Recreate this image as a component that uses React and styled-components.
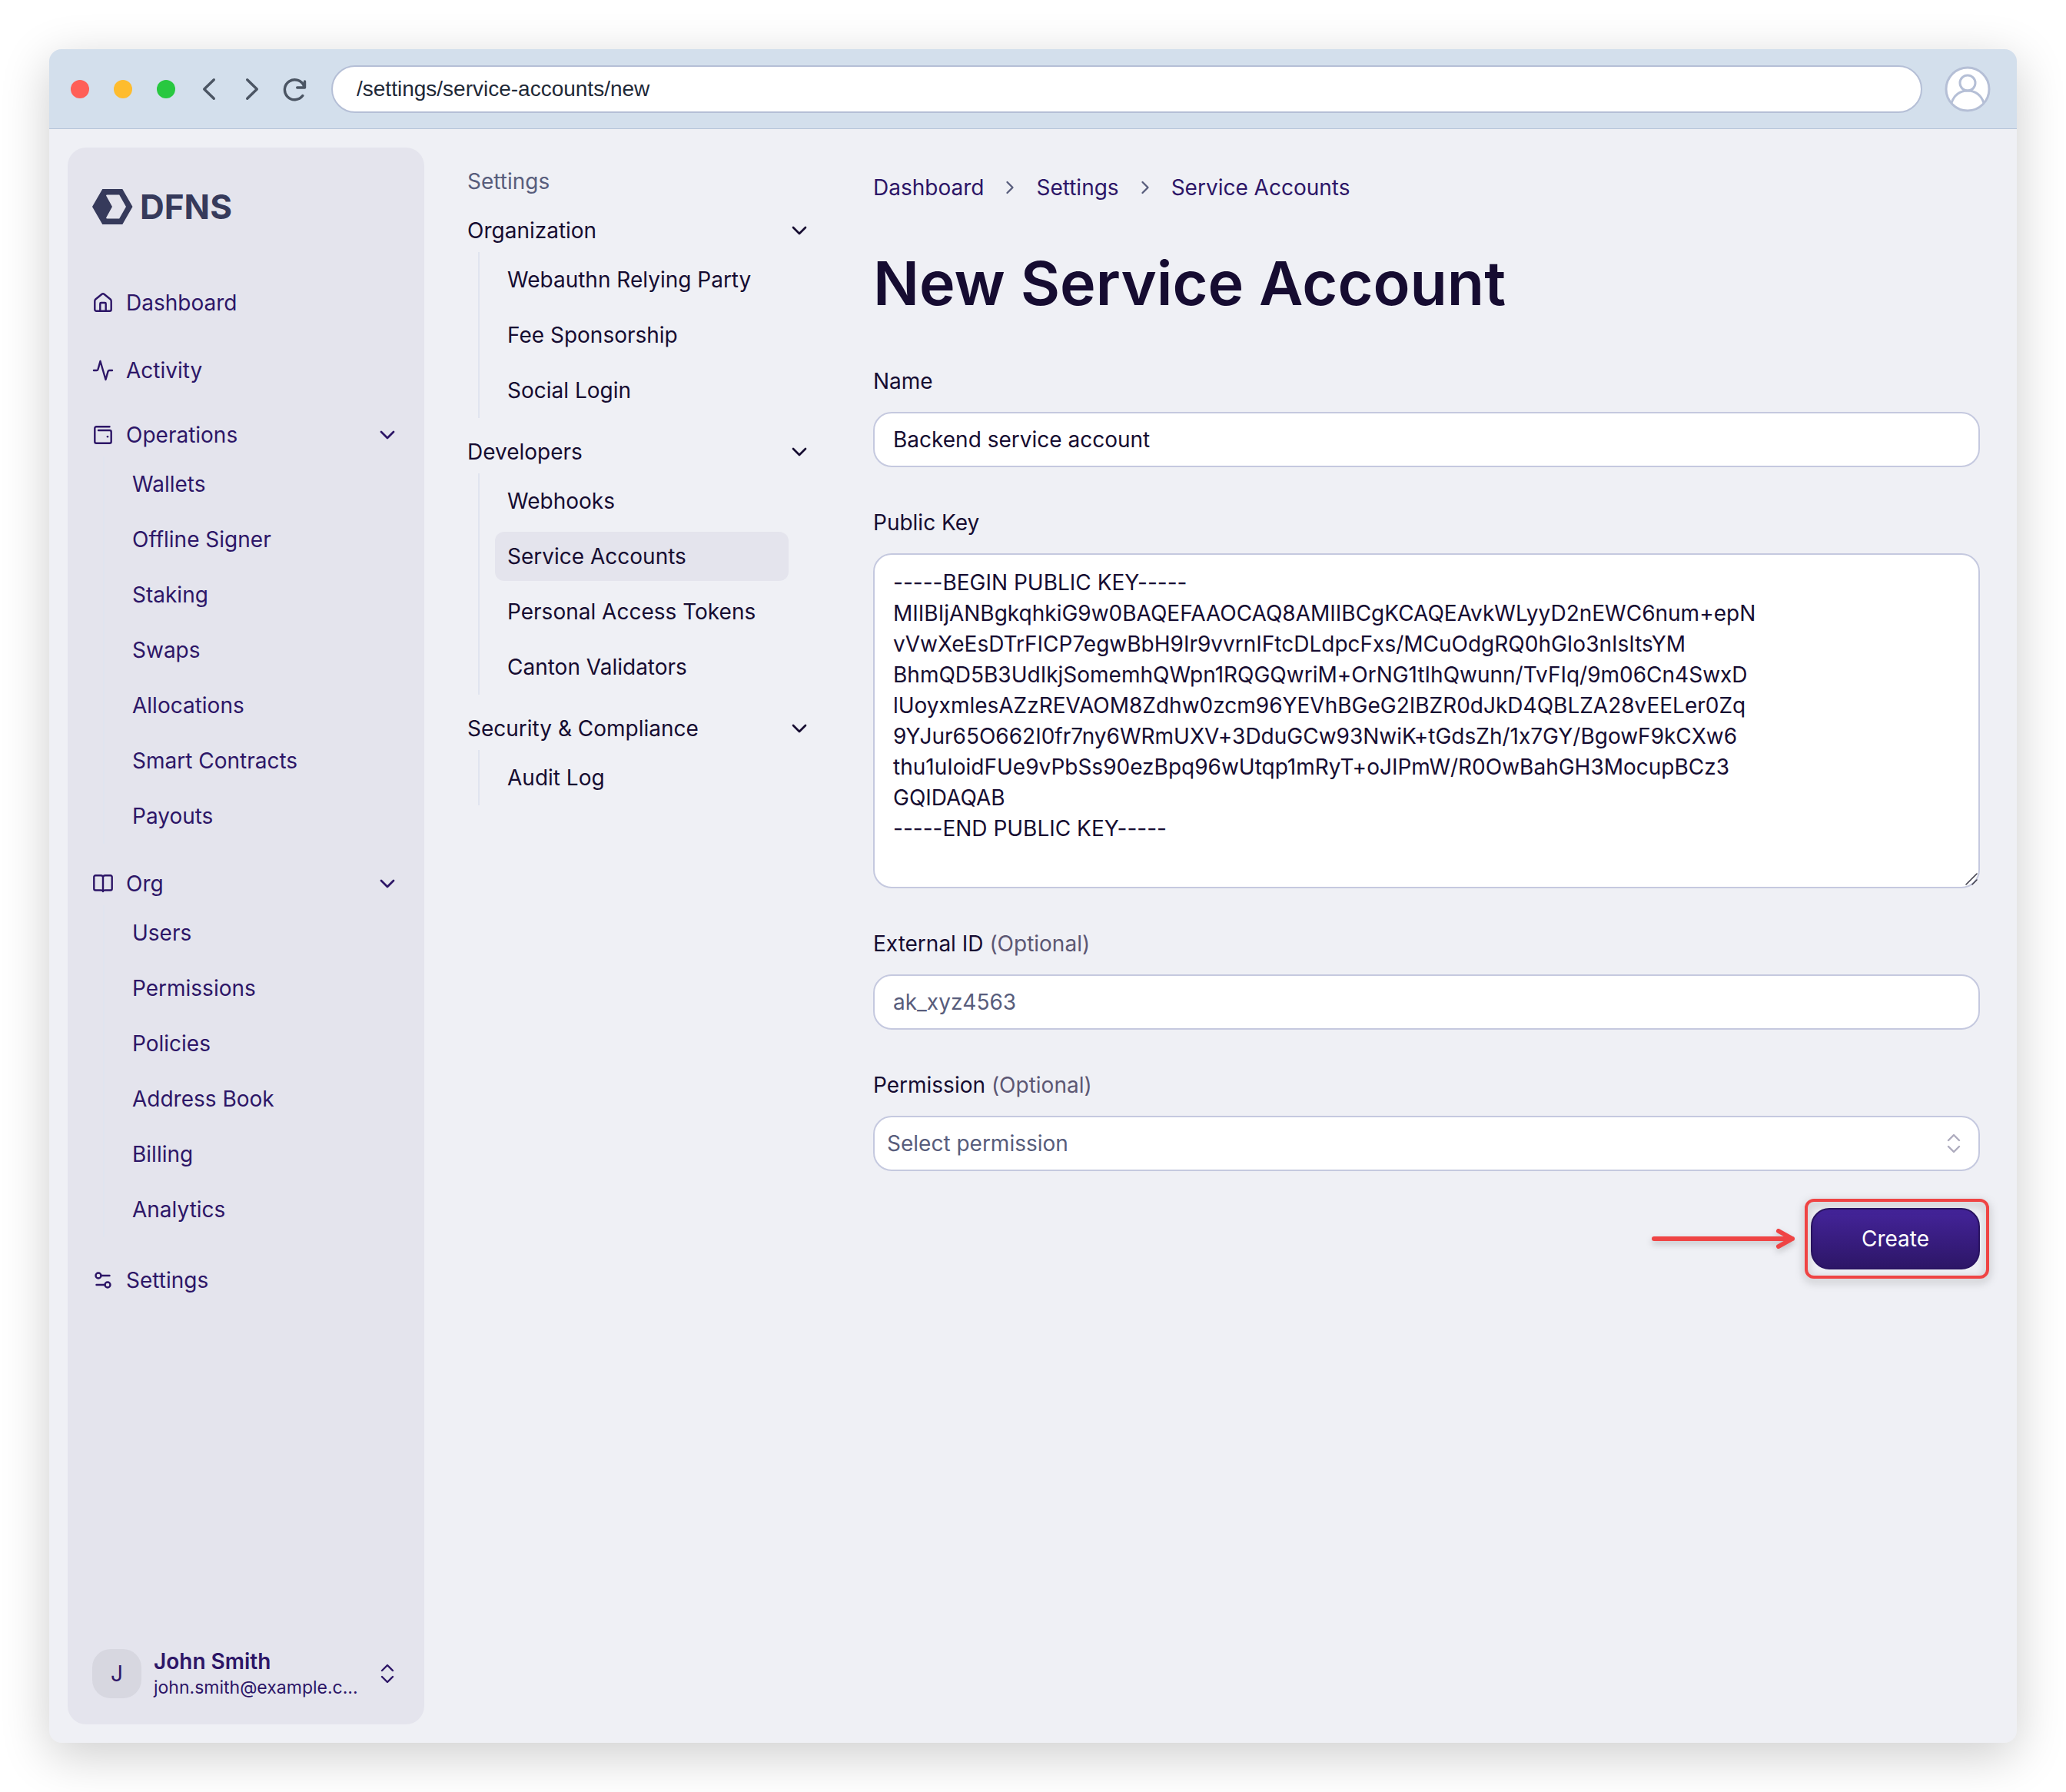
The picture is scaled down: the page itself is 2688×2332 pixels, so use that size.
import styled, { createGlobalStyle, css } from "styled-components";
import { ChevronDown, ChevronRight } from "lucide-react";

const ink = "#160c31";
const purple = "#2d1667";
const muted = "#585d7c";
const panel = "#e4e4ed";
const canvas = "#eff0f5";
const line = "#c5c9df";
const red = "#ef4444";

const GlobalStyle = createGlobalStyle`
  * {
    box-sizing: border-box;
  }
  body {
    margin: 0;
    background: #ffffff;
    color: ${ink};
    font-family: "Inter", "Liberation Sans", sans-serif;
    font-size: 28px;
    line-height: 40px;
    font-feature-settings: "calt" 0;
  }
  a {
    color: inherit;
    text-decoration: none;
  }
  button, input, select, textarea {
    font: inherit;
    font-feature-settings: inherit;
    color: inherit;
  }
  ul, ol {
    list-style: none;
    margin: 0;
    padding: 0;
  }
  svg {
    flex: none;
    display: block;
  }
`;

const Page = styled.div`
  padding: 64px;
`;

const Browser = styled.div`
  display: flex;
  flex-direction: column;
  min-height: calc(100vh - 128px);
  border-radius: 16px;
  overflow: hidden;
  background: ${canvas};
  box-shadow: 0 16px 64px rgba(0, 0, 0, 0.2);
`;

const Toolbar = styled.header`
  display: flex;
  align-items: center;
  height: 104px;
  padding: 0 34px 0 28px;
  background: #d3dfec;
  border-bottom: 1px solid #b5c4d8;
`;

const Lights = styled.div`
  display: flex;
  gap: 32px;
  margin-right: 16px;
`;

const Light = styled.span`
  width: 24px;
  height: 24px;
  border-radius: 50%;
  background: ${({ $color }) => $color};
`;

const ToolButton = styled.button`
  display: flex;
  align-items: center;
  justify-content: center;
  width: 56px;
  height: 40px;
  padding: 0;
  border: 0;
  background: none;
  color: #4b5563;
`;

const Address = styled.input`
  flex: 1;
  min-width: 0;
  height: 62px;
  margin: 0 29px 0 19px;
  padding: 0 31px;
  border: 2px solid #b5bfd6;
  border-radius: 31px;
  background: #ffffff;
  color: #1f2937;
  font-family: "Liberation Sans", Arial, sans-serif;
`;

const Body = styled.div`
  display: flex;
  flex: 1;
  padding: 24px 48px 24px 24px;
`;

const Sidebar = styled.aside`
  display: flex;
  flex-direction: column;
  flex: none;
  width: 464px;
  padding: 52px 32px 32px;
  border-radius: 24px;
  background: ${panel};
  color: ${purple};
`;

const Logo = styled.a`
  display: flex;
  align-items: center;
  gap: 8px;
  height: 50px;
  margin-bottom: 68px;
  color: #363a5b;
  font-size: 44px;
  font-weight: 700;
`;

const MainNav = styled.nav`
  display: flex;
  flex-direction: column;
  gap: 24px;
`;

const NavLink = styled.a`
  display: flex;
  align-items: center;
  gap: 16px;
  height: 64px;
`;

const GroupButton = styled.button`
  display: flex;
  align-items: center;
  gap: 16px;
  width: 100%;
  height: 56px;
  padding: 0;
  border: 0;
  background: none;
  text-align: left;

  span {
    flex: 1;
  }
`;

const SubList = styled.ul`
  margin-left: 14px;
  border-left: 2px solid #e0e4ef;

  ${({ $nested }) =>
    $nested &&
    css`
      padding: 0 30px 0 20px;
    `}
`;

const SubItem = styled.li`
  padding: 4px 0;
`;

const SubLink = styled.a`
  display: flex;
  align-items: center;
  height: 64px;
  padding: 0 ${({ $inset }) => $inset}px;
  border-radius: 12px;
  background: ${({ $active }) => ($active ? panel : "transparent")};
  white-space: nowrap;
`;

const Account = styled.button`
  display: flex;
  align-items: center;
  gap: 16px;
  width: 100%;
  height: 68px;
  margin-top: auto;
  padding: 0;
  border: 0;
  background: none;
  text-align: left;
`;

const Initial = styled.span`
  display: flex;
  flex: none;
  align-items: center;
  justify-content: center;
  width: 64px;
  height: 64px;
  border-radius: 24px;
  background: #d7d7e0;
`;

const Who = styled.span`
  display: flex;
  flex-direction: column;
  flex: 1;
  min-width: 0;
  white-space: nowrap;
`;

const FullName = styled.span`
  font-weight: 600;
  line-height: 36px;
`;

const Email = styled.span`
  font-size: 23px;
  line-height: 32px;
`;

const SettingsNav = styled.nav`
  flex: none;
  width: 448px;
  margin-left: 56px;
  padding-top: 24px;
`;

const NavTitle = styled.p`
  margin: 0 0 16px;
  color: ${muted};
`;

const Section = styled.section`
  margin-bottom: 16px;
`;

const Main = styled.main`
  flex: 1;
  min-width: 0;
  margin-left: 80px;
  padding-top: 32px;
`;

const Crumbs = styled.ol`
  display: flex;
  align-items: center;
  color: ${purple};
`;

const Crumb = styled.li`
  display: flex;
  align-items: center;

  svg {
    margin: 0 20px;
    color: ${muted};
  }
`;

const Title = styled.h1`
  margin: 56px 0 60px;
  font-size: 79px;
  line-height: 96px;
  font-weight: 600;
`;

const Form = styled.form`
  display: flex;
  flex-direction: column;
  gap: 52px;
`;

const Field = styled.div`
  display: flex;
  flex-direction: column;
  gap: 20px;
`;

const Label = styled.label`
  span {
    color: #5c5773;
  }
`;

const box = css`
  width: 100%;
  border: 2px solid ${line};
  border-radius: 24px;
  background: #ffffff;
  outline: none;
`;

const Input = styled.input`
  ${box}
  height: 72px;
  padding: 0 24px;

  &::placeholder {
    color: ${muted};
    opacity: 1;
  }
`;

const TextAreaWrap = styled.div`
  position: relative;

  svg {
    position: absolute;
    right: 2px;
    bottom: 3px;
    color: #43424f;
    pointer-events: none;
  }
`;

const TextArea = styled.textarea`
  ${box}
  display: block;
  height: 436px;
  padding: 16px 24px;
  resize: none;
`;

const SelectWrap = styled.div`
  position: relative;

  svg {
    position: absolute;
    top: 20px;
    right: 18px;
    color: #aeacbe;
    pointer-events: none;
  }
`;

const Select = styled.select`
  ${box}
  display: block;
  height: 72px;
  padding: 0 64px 0 16px;
  appearance: none;
  color: ${muted};
`;

const Actions = styled.div`
  display: flex;
  justify-content: flex-end;
  margin-top: -4px;
`;

const Highlight = styled.div`
  position: relative;

  &::after {
    content: "";
    position: absolute;
    inset: -12px -12px -12px -8px;
    border: 4px solid ${red};
    border-radius: 12px;
    filter: drop-shadow(0 4px 6px rgba(0, 0, 0, 0.3));
    pointer-events: none;
  }
`;

const Arrow = styled.svg`
  position: absolute;
  right: 100%;
  top: 20px;
  margin-right: 20px;
  color: ${red};
  filter: drop-shadow(0 4px 4px rgba(0, 0, 0, 0.2));
`;

const CreateButton = styled.button`
  display: block;
  width: 220px;
  height: 80px;
  border: 2px solid #2a1463;
  border-radius: 24px;
  background: linear-gradient(#44249a, #2d1667);
  color: #ffffff;
`;

const Icon = ({ children, size = 28, stroke = 2.4 }) => (
  <svg
    width={size}
    height={size}
    viewBox={`0 0 ${size} ${size}`}
    fill="none"
    stroke="currentColor"
    strokeWidth={stroke}
    strokeLinecap="round"
    strokeLinejoin="round"
    aria-hidden="true"
  >
    {children}
  </svg>
);

const HomeIcon = () => (
  <Icon>
    <path d="M3.3 11.8c0-1 .3-1.7 1-2.3l8.3-6.8c.9-.7 1.9-.7 2.8 0l8.3 6.8c.7.6 1 1.3 1 2.3v10.9a2 2 0 0 1-2 2H5.3a2 2 0 0 1-2-2z" />
    <path d="M10.3 24.5v-9.3a1.2 1.2 0 0 1 1.2-1.2h5a1.2 1.2 0 0 1 1.2 1.2v9.3" />
  </Icon>
);

const ActivityIcon = () => (
  <Icon>
    <path d="M2 14h3.6c1 0 1.6-.5 1.9-1.4L10.5 2l7 24 3-10.6c.3-.9.9-1.4 1.9-1.4H26" />
  </Icon>
);

const WalletIcon = () => (
  <Icon>
    <path d="M22.5 3.3H5.3a2 2 0 0 0-2 2v17.4a2 2 0 0 0 2 2h17.4a2 2 0 0 0 2-2V10a2 2 0 0 0-2-2H8" />
    <circle cx="20" cy="16.3" r="1.3" fill="currentColor" stroke="none" />
  </Icon>
);

const BookIcon = () => (
  <Icon>
    <path d="M14 5.8c0-1.600-1.200-2.600-3-2.600H4.300a2 2 0 0 0-2 2v15.300a2 2 0 0 0 2 2H11c1.800 0 3 .6 3 1.600 0-1 1.200-1.600 3-1.600h6.700a2 2 0 0 0 2-2V5.200a2 2 0 0 0-2-2H17c-1.800 0-3 1-3 2.600zV24" />
  </Icon>
);

const SlidersIcon = () => (
  <Icon>
    <circle cx="8" cy="8" r="3.5" />
    <path d="M11.5 8h11M5.5 20h11" />
    <circle cx="20" cy="20" r="3.5" />
  </Icon>
);

const UpDownIcon = () => (
  <Icon size={32}>
    <path d="M9 12l7-7 7 7M9 20l7 7 7-7" />
  </Icon>
);

const LogoMark = () => (
  <svg width="54" height="46" viewBox="0 0 54 46" aria-hidden="true">
    <path
      fill="currentColor"
      fillRule="evenodd"
      d="M13.3 0h26l13.2 23-13.2 23h-26L0 23zM19.5 7.5q-2 0-1.2 1.6L26 23l-7.7 13.9q-.8 1.6 1.2 1.6h15.7L44 23 35.2 7.5z"
    />
  </svg>
);

const operations = ["Wallets", "Offline Signer", "Staking", "Swaps", "Allocations", "Smart Contracts", "Payouts"];
const org = ["Users", "Permissions", "Policies", "Address Book", "Billing", "Analytics"];

const sections = [
  { title: "Organization", items: ["Webauthn Relying Party", "Fee Sponsorship", "Social Login"] },
  { title: "Developers", items: ["Webhooks", "Service Accounts", "Personal Access Tokens", "Canton Validators"] },
  { title: "Security & Compliance", items: ["Audit Log"] },
];

const publicKey = `-----BEGIN PUBLIC KEY-----
MIIBIjANBgkqhkiG9w0BAQEFAAOCAQ8AMIIBCgKCAQEAvkWLyyD2nEWC6num+epN
vVwXeEsDTrFICP7egwBbH9Ir9vvrnIFtcDLdpcFxs/MCuOdgRQ0hGIo3nIsItsYM
BhmQD5B3UdIkjSomemhQWpn1RQGQwriM+OrNG1tIhQwunn/TvFIq/9m06Cn4SwxD
lUoyxmlesAZzREVAOM8Zdhw0zcm96YEVhBGeG2IBZR0dJkD4QBLZA28vEELer0Zq
9YJur65O662I0fr7ny6WRmUXV+3DduGCw93NwiK+tGdsZh/1x7GY/BgowF9kCXw6
thu1uIoidFUe9vPbSs90ezBpq96wUtqp1mRyT+oJIPmW/R0OwBahGH3MocupBCz3
GQIDAQAB
-----END PUBLIC KEY-----`;

const Group = ({ icon, title, items }) => (
  <div>
    <GroupButton type="button">
      {icon}
      <span>{title}</span>
      <ChevronDown size={32} strokeWidth={2} />
    </GroupButton>
    <SubList>
      {items.map((item) => (
        <SubItem key={item}>
          <SubLink href="#" $inset={36}>{item}</SubLink>
        </SubItem>
      ))}
    </SubList>
  </div>
);

export default function App() {
  return (
    <Page>
      <GlobalStyle />
      <Browser>
        <Toolbar>
          <Lights>
            <Light $color="#ff5f57" />
            <Light $color="#febc2e" />
            <Light $color="#28c840" />
          </Lights>
          <ToolButton aria-label="Back">
            <Icon size={32} stroke={3.4}>
              <path d="M22.3 3.7L9.7 16l12.6 12.3" />
            </Icon>
          </ToolButton>
          <ToolButton aria-label="Forward">
            <Icon size={32} stroke={3.4}>
              <path d="M9.7 3.7L22.3 16 9.7 28.3" />
            </Icon>
          </ToolButton>
          <ToolButton aria-label="Reload">
            <Icon size={32} stroke={3.4}>
              <path d="M25.8 24.6A13 13 0 1 1 27.5 12M28.5 6v8H18.7" />
            </Icon>
          </ToolButton>
          <Address aria-label="Address" defaultValue="/settings/service-accounts/new" />
          <svg width="60" height="60" viewBox="0 0 60 60" fill="none" stroke="#b5bfd6" strokeWidth="3" aria-hidden="true">
            <circle cx="30" cy="30" r="28" fill="#ffffff" />
            <circle cx="30" cy="22" r="10" />
            <path d="M9 48C12 38 20 32 30 32s18 6 21 16" />
          </svg>
        </Toolbar>

        <Body>
          <Sidebar>
            <Logo href="#">
              <LogoMark />
              DFNS
            </Logo>
            <MainNav>
              <NavLink href="#"><HomeIcon />Dashboard</NavLink>
              <NavLink href="#"><ActivityIcon />Activity</NavLink>
              <Group icon={<WalletIcon />} title="Operations" items={operations} />
              <Group icon={<BookIcon />} title="Org" items={org} />
              <NavLink href="#"><SlidersIcon />Settings</NavLink>
            </MainNav>
            <Account type="button">
              <Initial>J</Initial>
              <Who>
                <FullName>John Smith</FullName>
                <Email>john.smith@example.c...</Email>
              </Who>
              <UpDownIcon />
            </Account>
          </Sidebar>

          <SettingsNav>
            <NavTitle>Settings</NavTitle>
            {sections.map(({ title, items }) => (
              <Section key={title}>
                <GroupButton type="button">
                  <span>{title}</span>
                  <ChevronDown size={32} strokeWidth={2} />
                </GroupButton>
                <SubList $nested>
                  {items.map((item) => (
                    <SubItem key={item}>
                      <SubLink href="#" $inset={16} $active={item === "Service Accounts"}>{item}</SubLink>
                    </SubItem>
                  ))}
                </SubList>
              </Section>
            ))}
          </SettingsNav>

          <Main>
            <Crumbs>
              <Crumb><a href="#">Dashboard</a><ChevronRight size={28} strokeWidth={2} /></Crumb>
              <Crumb><a href="#">Settings</a><ChevronRight size={28} strokeWidth={2} /></Crumb>
              <Crumb><a href="#">Service Accounts</a></Crumb>
            </Crumbs>
            <Title>New Service Account</Title>
            <Form>
              <Field>
                <Label htmlFor="name">Name</Label>
                <Input id="name" defaultValue="Backend service account" />
              </Field>
              <Field>
                <Label htmlFor="key">Public Key</Label>
                <TextAreaWrap>
                  <TextArea id="key" defaultValue={publicKey} spellCheck={false} />
                  <Icon size={18} stroke={1.6}>
                    <path d="M2 16L16 2M10 16l6-6" />
                  </Icon>
                </TextAreaWrap>
              </Field>
              <Field>
                <Label htmlFor="external">External ID <span>(Optional)</span></Label>
                <Input id="external" placeholder="ak_xyz4563" />
              </Field>
              <Field>
                <Label htmlFor="permission">Permission <span>(Optional)</span></Label>
                <SelectWrap>
                  <Select id="permission">
                    <option>Select permission</option>
                  </Select>
                  <UpDownIcon />
                </SelectWrap>
              </Field>
              <Actions>
                <Highlight>
                  <Arrow width="196" height="40" viewBox="0 0 196 40" fill="none" stroke="currentColor" strokeWidth="6" strokeLinecap="round" strokeLinejoin="round" aria-hidden="true">
                    <path d="M12 20h180M174 10l18 10-18 10" />
                  </Arrow>
                  <CreateButton type="button">Create</CreateButton>
                </Highlight>
              </Actions>
            </Form>
          </Main>
        </Body>
      </Browser>
    </Page>
  );
}
